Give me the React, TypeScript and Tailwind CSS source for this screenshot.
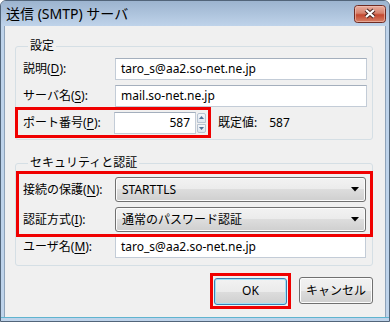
import React from "react";

const font = "font-['Noto_Sans','Noto_Sans_CJK_JP',sans-serif]";

function U({ c }: { c: string }) {
  return <span className="underline underline-offset-[2px]">{c}</span>;
}

function TextBox({ value, width = "w-[252px]", right }: { value: string; width?: string; right?: boolean }) {
  return (
    <div
      className={`${width} h-[22px] flex items-center bg-white border border-[#c3ccd7] border-t-[#a4afbd] px-[5px] text-[12px] text-black ${right ? "justify-end" : ""}`}
    >
      {value}
    </div>
  );
}

function Select({ value }: { value: string }) {
  return (
    <div className="w-[251px] h-[25px] flex items-center justify-between rounded-[3px] border border-[#707070] bg-[linear-gradient(to_bottom,#f2f2f2_0%,#ebebeb_50%,#dddddd_50%,#cfcfcf_100%)] shadow-[inset_0_0_0_1px_#fcfcfc] pl-[6px] pr-[6px] text-[12px] text-black">
      <span>{value}</span>
      <svg width="8" height="5" viewBox="0 0 8 5">
        <path d="M0 0 H8 L4 4.5 Z" fill="#000" />
      </svg>
    </div>
  );
}

function Row({ label, children }: { label: React.ReactNode; children: React.ReactNode }) {
  return (
    <div className="flex items-center">
      <div className="w-[92px] text-[12px] text-black">{label}</div>
      {children}
    </div>
  );
}

function RedBox({ className }: { className: string }) {
  return <div className={`absolute pointer-events-none border-[3px] border-[#f00000] ${className}`} />;
}

function Spinner() {
  return (
    <div className="flex flex-col gap-[1px] h-[20px] w-[9px]">
      <div className="flex-1 flex items-center justify-center border border-[#b7c3d1] rounded-t-[2px] bg-[linear-gradient(to_bottom,#f3f6fa,#dde5ee)]">
        <svg width="5" height="3" viewBox="0 0 5 3">
          <path d="M0 3 L2.5 0 L5 3 Z" fill="#4d6d94" />
        </svg>
      </div>
      <div className="flex-1 flex items-center justify-center border border-[#b7c3d1] rounded-b-[2px] bg-[linear-gradient(to_bottom,#f3f6fa,#dde5ee)]">
        <svg width="5" height="3" viewBox="0 0 5 3">
          <path d="M0 0 L5 0 L2.5 3 Z" fill="#4d6d94" />
        </svg>
      </div>
    </div>
  );
}

// window close glyph (Win7 red X button)
function CloseIcon() {
  return (
    <svg width="32" height="18" viewBox="0 0 32 18" className="block shrink-0">
      <defs>
        <linearGradient id="cls" x1="0" y1="0" x2="0" y2="1">
          <stop offset="0" stopColor="#eab0a2" />
          <stop offset="0.45" stopColor="#d6826d" />
          <stop offset="0.55" stopColor="#c3472f" />
          <stop offset="1" stopColor="#d8846a" />
        </linearGradient>
      </defs>
      <rect x="0.5" y="0.5" width="31" height="17" rx="3" fill="url(#cls)" stroke="#6e2b23" />
      <rect x="1.5" y="1.5" width="29" height="15" rx="2" fill="none" stroke="#f1c6ba" strokeOpacity="0.6" />
      <path d="M12 5 L20 12 M20 5 L12 12" stroke="#4a2520" strokeWidth="4.2" />
      <path d="M12 5 L20 12 M20 5 L12 12" stroke="#ffffff" strokeWidth="2.2" />
    </svg>
  );
}

export default function App() {
  return (
    <div className={`${font} w-[390px] h-[322px] bg-white`}>
      <div className="w-[390px] h-[322px] flex flex-col rounded-t-[6px] border border-[#52657a] bg-[#bed3ea]">
        {/* title bar */}
        <div className="h-[25px] flex items-start bg-gradient-to-b from-[#9cb4cf] to-[#bfd3ea] rounded-t-[5px] pl-[5px] pr-[3px]">
          <span className="pt-[5px] text-[14px] text-black leading-[16px]">送信 (SMTP) サーバ</span>
          <div className="ml-auto pt-[4px]">
            <CloseIcon />
          </div>
        </div>

        {/* client area */}
        <div className="mx-[3px] h-[291px] bg-[#f0f0f0] border-x border-[#8fa3b9] pl-[10px] pr-[12px] pt-[12px] flex flex-col">
          <fieldset className="w-[358px] border border-[#d5dfe5] rounded-[3px] pl-[7px] pr-[5px] pb-[5px]">
            <legend className="ml-[5px] px-[2px] text-[12px] leading-[16px] text-black">設定</legend>
            <div className="flex flex-col gap-[5px] pt-[4px]">
              <Row label={<>説明(<U c="D" />):</>}>
                <TextBox value="taro_s@aa2.so-net.ne.jp" />
              </Row>
              <Row label={<>サーバ名(<U c="S" />):</>}>
                <TextBox value="mail.so-net.ne.jp" />
              </Row>
              <div className="relative">
                <RedBox className="-left-[8px] -top-[5px] w-[196px] h-[31px]" />
                <Row label={<>ポート番号(<U c="P" />):</>}>
                  <div className="-ml-[1px]">
                    <TextBox value="587" width="w-[82px]" right />
                  </div>
                  <div className="ml-[1px]">
                    <Spinner />
                  </div>
                  <span className="ml-[12px] text-[12px] text-black">既定値:</span>
                  <span className="ml-[12px] text-[12px] text-black">587</span>
                </Row>
              </div>
            </div>
          </fieldset>

          <fieldset className="mt-[15px] w-[358px] border border-[#d5dfe5] rounded-[3px] pl-[7px] pr-[5px] pb-[7px]">
            <legend className="ml-[5px] px-[2px] text-[12px] leading-[16px] text-black">セキュリティと認証</legend>
            <div className="flex flex-col pt-[6px]">
              <div className="relative flex flex-col gap-[5px]">
                <RedBox className="-left-[7px] -top-[6px] w-[357px] h-[66px]" />
                <Row label={<>接続の保護(<U c="N" />):</>}>
                  <Select value="STARTTLS" />
                </Row>
                <Row label={<>認証方式(<U c="I" />):</>}>
                  <Select value="通常のパスワード認証" />
                </Row>
              </div>
              <div className="mt-[4px]">
                <Row label={<>ユーザ名(<U c="M" />):</>}>
                  <TextBox value="taro_s@aa2.so-net.ne.jp" width="w-[251px]" />
                </Row>
              </div>
            </div>
          </fieldset>

          <div className="mt-[11px] flex justify-end gap-[12px] w-[358px]">
            <div className="relative">
              <RedBox className="-inset-[4px]" />
              <button className="w-[73px] h-[27px] rounded-[3px] border border-[#3c7fb1] bg-[linear-gradient(to_bottom,#f2f2f2_0%,#ebebeb_50%,#dddddd_50%,#cfcfcf_100%)] shadow-[inset_0_0_0_1px_#9fe2f7] text-[12px] text-black">
                OK
              </button>
            </div>
            <button className="w-[74px] h-[27px] rounded-[3px] border border-[#707070] bg-[linear-gradient(to_bottom,#f2f2f2_0%,#ebebeb_50%,#dddddd_50%,#cfcfcf_100%)] shadow-[inset_0_0_0_1px_#fcfcfc] text-[12px] text-black">
              キャンセル
            </button>
          </div>
        </div>
        <div className="flex-1 border-t border-[#5fb4cf]" />
      </div>
    </div>
  );
}
